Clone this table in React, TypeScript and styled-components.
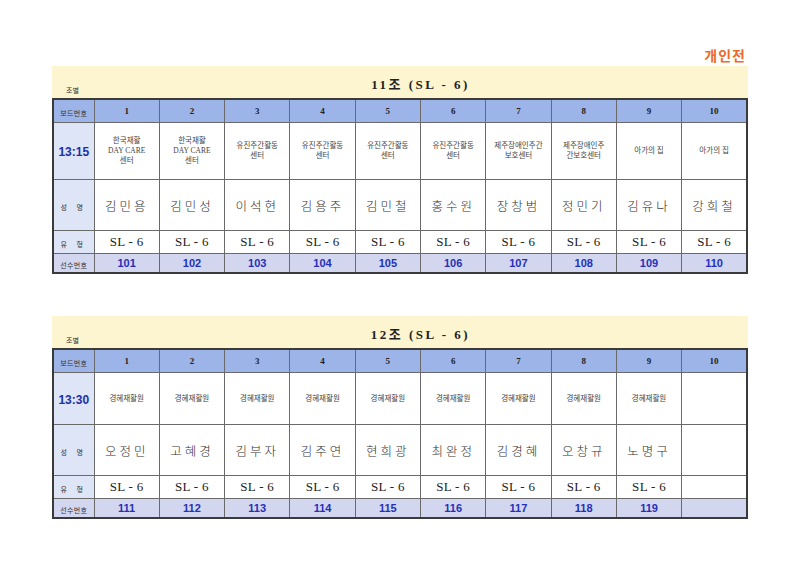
import styled, { createGlobalStyle } from 'styled-components';

const GlobalStyle = createGlobalStyle`
  html, body {
    margin: 0;
    padding: 0;
    background: #ffffff;
  }
  body {
    font-family: 'Liberation Serif', 'Noto Sans CJK KR', serif;
    color: #222;
  }
`;

type Entry = {
  club: string[];
  name: string;
  no: number;
};

type Group = {
  title: string;
  time: string;
  clubRow: number;
  entries: (Entry | null)[];
};

const groups: Group[] = [
  {
    title: '11조 (SL - 6)',
    time: '13:15',
    clubRow: 56,
    entries: [
      { club: ['한국재활', 'DAY CARE', '센터'], name: '김민용', no: 101 },
      { club: ['한국재활', 'DAY CARE', '센터'], name: '김민성', no: 102 },
      { club: ['유진주간활동', '센터'], name: '이석현', no: 103 },
      { club: ['유진주간활동', '센터'], name: '김용주', no: 104 },
      { club: ['유진주간활동', '센터'], name: '김민철', no: 105 },
      { club: ['유진주간활동', '센터'], name: '홍수원', no: 106 },
      { club: ['제주장애인주간', '보호센터'], name: '장창범', no: 107 },
      { club: ['제주장애인주', '간보호센터'], name: '정민기', no: 108 },
      { club: ['아가의 집'], name: '김유나', no: 109 },
      { club: ['아가의 집'], name: '강희철', no: 110 },
    ],
  },
  {
    title: '12조 (SL - 6)',
    time: '13:30',
    clubRow: 51,
    entries: [
      { club: ['경혜재활원'], name: '오정민', no: 111 },
      { club: ['경혜재활원'], name: '고혜경', no: 112 },
      { club: ['경혜재활원'], name: '김부자', no: 113 },
      { club: ['경혜재활원'], name: '김주연', no: 114 },
      { club: ['경혜재활원'], name: '현희광', no: 115 },
      { club: ['경혜재활원'], name: '최완정', no: 116 },
      { club: ['경혜재활원'], name: '김경혜', no: 117 },
      { club: ['경혜재활원'], name: '오창규', no: 118 },
      { club: ['경혜재활원'], name: '노명구', no: 119 },
      null,
    ],
  },
];

const App = () => {
  return (
    <Page>
      <GlobalStyle />
      <TopTitle>개인전</TopTitle>
      {groups.map((g, gi) => (
        <Section key={g.title} $first={gi === 0}>
          <Band>
            <BandLabel>조별</BandLabel>
            <BandTitle>{g.title}</BandTitle>
          </Band>
          <Table>
            <colgroup>
              <col style={{ width: 41 }} />
              {g.entries.map((_, i) => (
                <col key={i} />
              ))}
            </colgroup>
            <tbody>
              <tr>
                <HeadCell $h={22}>
                  <Small>보드번호</Small>
                </HeadCell>
                {g.entries.map((_, i) => (
                  <BoardNo key={i}>{i + 1}</BoardNo>
                ))}
              </tr>
              <tr>
                <SideCell $h={g.clubRow}>
                  <Time>{g.time}</Time>
                </SideCell>
                {g.entries.map((e, i) => (
                  <Club key={i}>
                    {e?.club.map((line) => (
                      <div key={line}>{line}</div>
                    ))}
                  </Club>
                ))}
              </tr>
              <tr>
                <SideCell $h={50}>
                  <Small $spaced>성 명</Small>
                </SideCell>
                {g.entries.map((e, i) => (
                  <Name key={i}>{e?.name}</Name>
                ))}
              </tr>
              <tr>
                <SideCell $h={22}>
                  <Small $spaced>유 형</Small>
                </SideCell>
                {g.entries.map((e, i) => (
                  <Type key={i}>{e ? 'SL - 6' : ''}</Type>
                ))}
              </tr>
              <tr>
                <FootSide $h={18}>
                  <Small>선수번호</Small>
                </FootSide>
                {g.entries.map((e, i) => (
                  <PlayerNo key={i}>{e?.no}</PlayerNo>
                ))}
              </tr>
            </tbody>
          </Table>
        </Section>
      ))}
    </Page>
  );
};

export default App;

const Page = styled.div`
  width: 696px;
  padding: 44px 0 0 52px;
`;

const TopTitle = styled.div`
  text-align: right;
  padding-right: 2px;
  height: 22px;
  font-family: 'Noto Sans CJK KR', sans-serif;
  font-weight: 700;
  font-size: 14px;
  line-height: 22px;
  letter-spacing: 1px;
  color: #ea6b2c;
`;

const Section = styled.section<{ $first?: boolean }>`
  margin-top: ${(p) => (p.$first ? '0' : '42px')};
`;

const Band = styled.div`
  display: flex;
  align-items: flex-end;
  height: 32px;
  background: #fdf4d0;
`;

const BandLabel = styled.div`
  width: 41px;
  text-align: center;
  font-family: 'Noto Sans CJK KR', sans-serif;
  font-size: 7px;
  line-height: 14px;
  color: #333;
  padding-bottom: 1px;
`;

const BandTitle = styled.div`
  flex: 1;
  text-align: center;
  font-family: 'Liberation Serif', 'Noto Sans CJK KR', serif;
  font-weight: 700;
  font-size: 13px;
  letter-spacing: 2.5px;
  line-height: 26px;
  color: #222;
`;

const Table = styled.table`
  width: 696px;
  table-layout: fixed;
  border-collapse: collapse;
  border: 2px solid #3a3a3a;
`;

const Cell = styled.td<{ $h?: number }>`
  border: 1px solid #6a6a6a;
  padding: 0;
  text-align: center;
  vertical-align: middle;
  height: ${(p) => (p.$h ? `${p.$h}px` : 'auto')};
`;

const HeadCell = styled(Cell)`
  background: #9db4e8;
`;

const SideCell = styled(Cell)`
  background: #dde5f6;
`;

const FootSide = styled(Cell)`
  background: #d3d6ef;
`;

const Small = styled.span<{ $spaced?: boolean }>`
  font-family: 'Noto Sans CJK KR', sans-serif;
  font-size: 7px;
  color: #333;
  letter-spacing: ${(p) => (p.$spaced ? '4px' : '0.3px')};
`;

const BoardNo = styled(Cell)`
  background: #9db4e8;
  font-family: 'Liberation Serif', serif;
  font-weight: 700;
  font-size: 9px;
  color: #222;
`;

const Time = styled.span`
  font-family: 'Liberation Sans', Arial, sans-serif;
  font-weight: 700;
  font-size: 12px;
  color: #1c2ea8;
`;

const Club = styled(Cell)`
  font-family: 'Liberation Serif', 'Noto Sans CJK KR', serif;
  font-size: 7.5px;
  line-height: 10px;
  color: #444;
`;

const Name = styled(Cell)`
  font-family: 'Noto Sans CJK KR', sans-serif;
  font-weight: 300;
  font-size: 12.5px;
  letter-spacing: 3px;
  color: #333;
`;

const Type = styled(Cell)`
  font-family: 'Liberation Serif', serif;
  font-size: 13px;
  letter-spacing: 0.3px;
  color: #222;
`;

const PlayerNo = styled(Cell)`
  background: #d3d6ef;
  font-family: 'Liberation Sans', Arial, sans-serif;
  font-weight: 700;
  font-size: 11px;
  color: #2430b8;
`;
